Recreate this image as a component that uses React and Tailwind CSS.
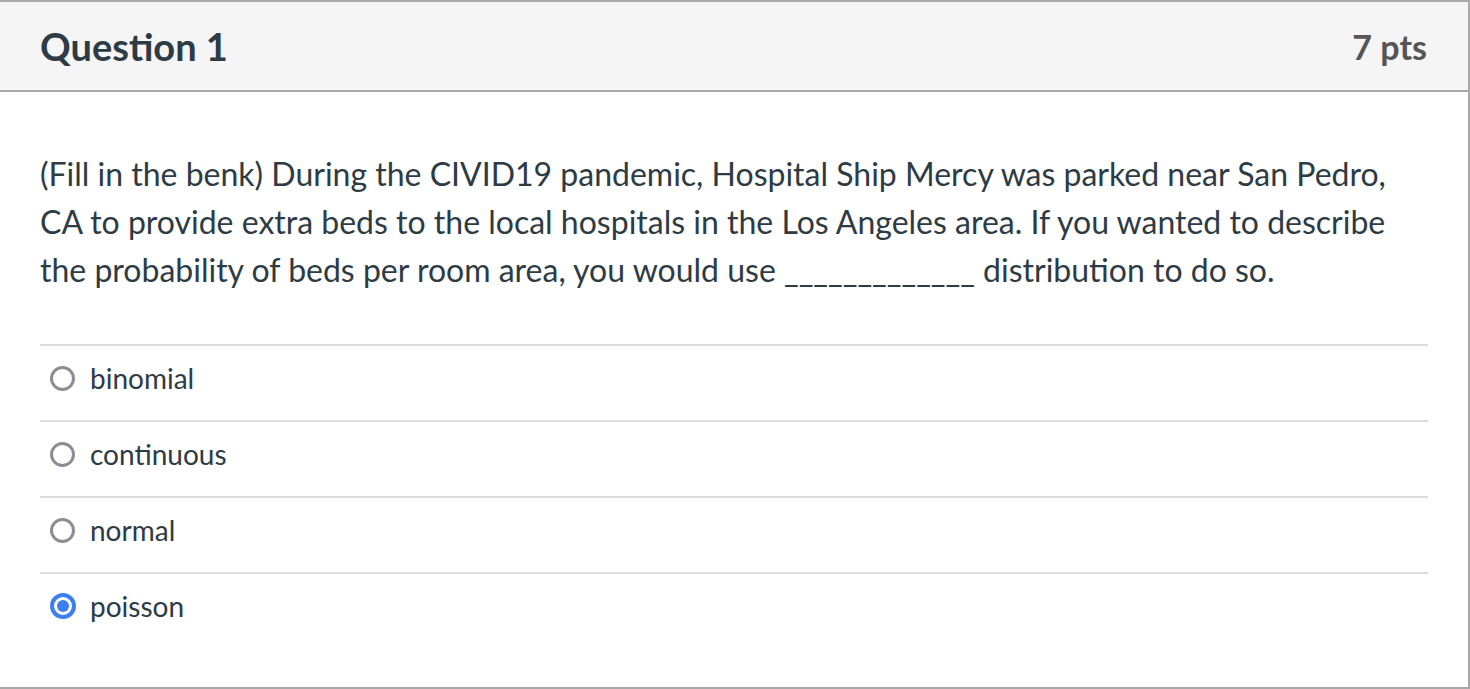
import React from "react";

const options = [
  { label: "binomial", selected: false },
  { label: "continuous", selected: false },
  { label: "normal", selected: false },
  { label: "poisson", selected: true },
];

function Radio({ selected }) {
  if (selected) {
    return (
      <span className="flex h-[26px] w-[26px] shrink-0 items-center justify-center rounded-full border-[4px] border-[#3b7ff0] bg-white">
        <span className="h-[12px] w-[12px] rounded-full bg-[#3b7ff0]" />
      </span>
    );
  }
  return (
    <span className="h-[25px] w-[25px] shrink-0 rounded-full border-[3px] border-[#8d8c96] bg-white" />
  );
}

export default function App() {
  return (
    <div
      className="h-[689px] w-[1470px] bg-white"
      style={{ fontFamily: "Lato, 'Noto Sans', sans-serif" }}
    >
      <div className="flex h-full flex-col border-t-2 border-r-2 border-b-2 border-[#a9a9a9]">
        <div className="flex h-[90px] shrink-0 items-center justify-between border-b-2 border-[#a9a9a9] bg-[#f5f5f5] pl-[40px] pr-[41px]">
          <span className="text-[38px] font-bold text-[#2d3b45]">Question 1</span>
          <span className="text-[34px] font-bold text-[#555555]">7 pts</span>
        </div>
        <div className="px-[40px] pt-[58px]">
          <p className="text-[32px] leading-[48px] text-[#2d3b45]">
            (Fill in the benk) During the CIVID19 pandemic, Hospital Ship Mercy was parked near San Pedro, CA to provide extra beds to the local hospitals in the Los Angeles area. If you wanted to describe the probability of beds per room area, you would use _____________ distribution to do so.
          </p>
          <div className="mt-[50px]">
            {options.map((o) => (
              <div
                key={o.label}
                className="flex h-[76px] items-start gap-[15px] border-t-2 border-[#dcdcdc] pl-[10px] pt-[12px]"
              >
                <span className="flex h-[40px] w-[25px] items-center justify-center">
                  <Radio selected={o.selected} />
                </span>
                <span className="text-[28px] leading-[40px] text-[#2d3b45]">{o.label}</span>
              </div>
            ))}
          </div>
        </div>
      </div>
    </div>
  );
}
